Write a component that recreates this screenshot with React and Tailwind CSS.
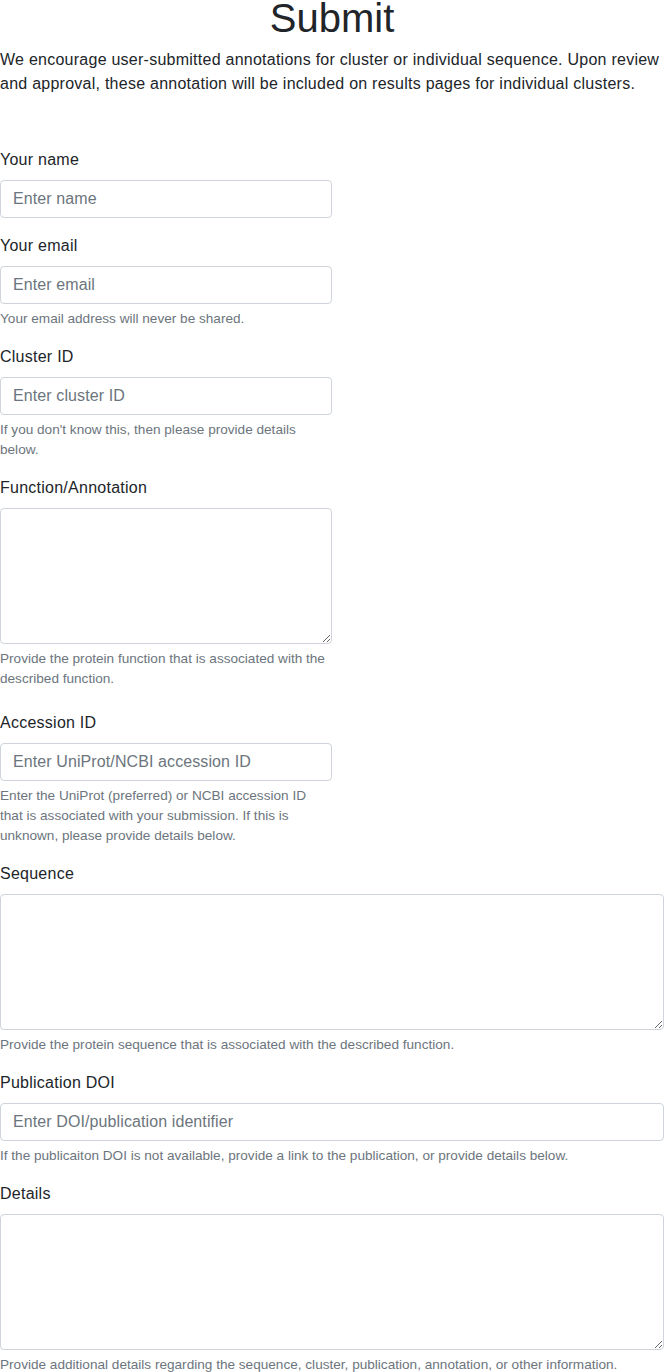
import React from 'react';

const font = { fontFamily: '"Liberation Sans", Arial, sans-serif' };

// Campo de formulario estilo bootstrap
const Field = ({ label, placeholder, help, textarea, className = '' }) => (
    <div className={`mb-4 ${className}`}>
        <label className="block text-[16px] leading-6 tracking-[0.25px] text-[#212529] mb-2">{label}</label>
        {textarea ? (
            <textarea
                className="block w-full h-[136px] border border-[#ced4da] rounded bg-white px-3 py-1.5 text-[16px] leading-6 text-[#495057] outline-none"
                style={font}
            />
        ) : (
            <input
                type="text"
                placeholder={placeholder}
                className="block w-full h-[38px] border border-[#ced4da] rounded bg-white px-3 text-[16px] leading-6 tracking-[0.1px] text-[#495057] placeholder:text-[#6c757d] outline-none"
                style={font}
            />
        )}
        {help && (
            <p className="mt-[5px] text-[13.6px] leading-5 text-[#6c757d]">{help}</p>
        )}
    </div>
);

const App = () => {
    return (
        <div className="w-[664px] bg-white text-[#212529]" style={font}>
            {/* Header */}
            <h1 className="text-center text-[40px] leading-[34px] font-normal pt-px">Submit</h1>
            <p className="mt-[13px] text-[16px] leading-6 tracking-[0.25px]">
                We encourage user-submitted annotations for cluster or individual sequence. Upon review and approval, these annotation will be included on results pages for individual clusters.
            </p>

            {/* Formulario */}
            <form className="mt-[52px]">
                <div className="w-[332px]">
                    <Field label="Your name" placeholder="Enter name" />
                    <Field label="Your email" placeholder="Enter email" help="Your email address will never be shared." />
                    <Field label="Cluster ID" placeholder="Enter cluster ID" help="If you don't know this, then please provide details below." />
                    <Field
                        label="Function/Annotation"
                        textarea
                        help="Provide the protein function that is associated with the described function."
                        className="mb-[22px]"
                    />
                    <Field
                        label="Accession ID"
                        placeholder="Enter UniProt/NCBI accession ID"
                        help="Enter the UniProt (preferred) or NCBI accession ID that is associated with your submission. If this is unknown, please provide details below."
                    />
                </div>
                <Field label="Sequence" textarea help="Provide the protein sequence that is associated with the described function." />
                <Field
                    label="Publication DOI"
                    placeholder="Enter DOI/publication identifier"
                    help="If the publicaiton DOI is not available, provide a link to the publication, or provide details below."
                />
                <Field
                    label="Details"
                    textarea
                    help="Provide additional details regarding the sequence, cluster, publication, annotation, or other information."
                />
            </form>
        </div>
    );
};

export default App;
